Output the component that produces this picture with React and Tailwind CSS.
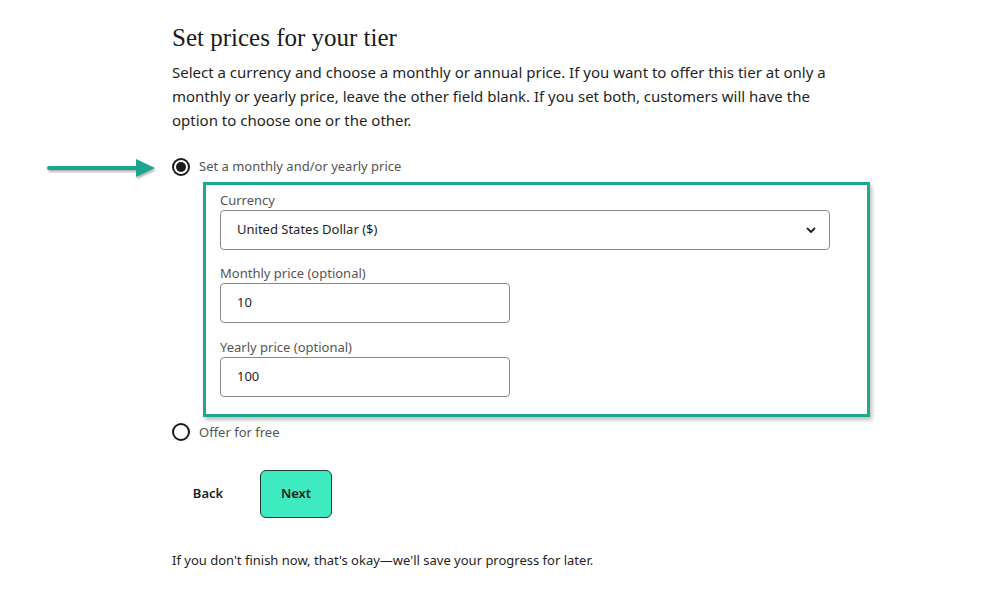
import React, { useState } from 'react';

const sans = 'font-["Segoe_UI","Noto_Sans","Open_Sans",sans-serif]';

function Radio({ checked }) {
  return (
    <span className="flex h-[18px] w-[18px] items-center justify-center rounded-full border-2 border-[#1a1a1a]">
      {checked && <span className="h-[10px] w-[10px] rounded-full bg-[#1a1a1a]" />}
    </span>
  );
}

function Field({ label, children }) {
  return (
    <div className="flex flex-col">
      <label className="text-[13px] leading-[18px] text-[#555]">{label}</label>
      <div className="mt-[1px]">{children}</div>
    </div>
  );
}

export default function App() {
  const [mode] = useState('paid');

  return (
    <div className={`relative min-h-[591px] bg-white ${sans}`}>
      {/* annotation arrow */}
      <svg className="absolute left-[44px] top-[157px]" width="118" height="26" viewBox="0 0 118 26">
        <defs>
          <filter id="sh" x="-10%" y="-40%" width="130%" height="190%">
            <feDropShadow dx="1" dy="2" stdDeviation="1.2" floodColor="#000" floodOpacity="0.3" />
          </filter>
        </defs>
        <g filter="url(#sh)">
          <line x1="5" y1="11" x2="96" y2="11" stroke="#1ba58c" strokeWidth="4" strokeLinecap="round" />
          <path d="M92 2 L111 11 L92 20 Z" fill="#1ba58c" />
        </g>
      </svg>

      <div className="pl-[172px] pt-[22px]">
        <h1 className='font-["Liberation_Serif","DejaVu_Serif",serif] text-[25px] leading-[32px] text-[#1a1a1a]'>
          Set prices for your tier
        </h1>
        <p className="mt-[6px] text-[15px] leading-[24px] text-[#1f1f1f]">
          Select a currency and choose a monthly or annual price. If you want to offer this tier at only a<br />
          monthly or yearly price, leave the other field blank. If you set both, customers will have the<br />
          option to choose one or the other.
        </p>

        <div className="mt-[25px] flex items-center gap-[9px]">
          <Radio checked={mode === 'paid'} />
          <span className="text-[13px] text-[#555]">Set a monthly and/or yearly price</span>
        </div>

        <div className="ml-[31px] mt-[5px] w-[667px] border-[3px] border-[#1ea890] pb-[17px] pl-[14px] pt-[6px] shadow-[2px_3px_4px_rgba(0,0,0,0.25)]">
          <div className="flex flex-col">
            <Field label="Currency">
              <div className="flex h-[40px] w-[610px] items-center justify-between rounded-[4px] border border-[#8a8a8a] pl-[16px] pr-[12px] text-[13px] text-[#1f1f1f]">
                <span>United States Dollar ($)</span>
                <svg width="12" height="12" viewBox="0 0 12 12">
                  <path d="M2.5 4.5 L6 8 L9.5 4.5" fill="none" stroke="#222" strokeWidth="1.8" strokeLinecap="round" strokeLinejoin="round" />
                </svg>
              </div>
            </Field>
            <div className="mt-[14px]">
              <Field label="Monthly price (optional)">
                <div className="flex h-[40px] w-[290px] items-center rounded-[4px] border border-[#8a8a8a] pl-[16px] text-[13px] text-[#1f1f1f]">
                  10
                </div>
              </Field>
            </div>
            <div className="mt-[15px]">
              <Field label="Yearly price (optional)">
                <div className="flex h-[40px] w-[290px] items-center rounded-[4px] border border-[#8a8a8a] pl-[16px] text-[13px] text-[#1f1f1f]">
                  100
                </div>
              </Field>
            </div>
          </div>
        </div>

        <div className="mt-[6px] flex items-center gap-[9px]">
          <Radio checked={mode === 'free'} />
          <span className="text-[13px] text-[#555]">Offer for free</span>
        </div>

        <div className="mt-[28px] flex items-center gap-[16px]">
          <button className="h-[48px] w-[72px] text-[13px] font-semibold text-[#1f1f1f]">Back</button>
          <button className="h-[48px] w-[72px] rounded-[6px] border border-[#1f3a33] bg-[#3eeabf] text-[13px] font-semibold text-[#1f1f1f]">
            Next
          </button>
        </div>

        <p className="mt-[33px] text-[13px] text-[#1f1f1f]">
          If you don't finish now, that's okay—we'll save your progress for later.
        </p>
      </div>
    </div>
  );
}
